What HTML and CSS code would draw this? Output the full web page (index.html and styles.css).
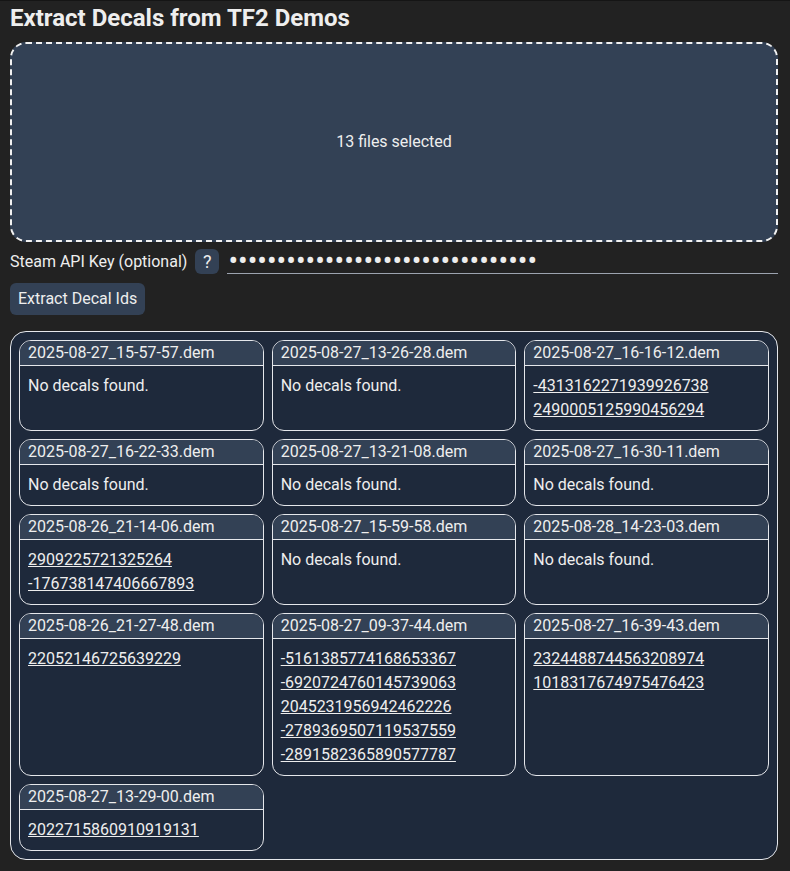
FILE: index.html
```html
<!DOCTYPE html>
<html>
<head>
<meta charset="utf-8">
<link rel="stylesheet" href="styles.css">
</head>
<body>
<div class="page">
  <h1 class="title">Extract Decals from TF2 Demos</h1>
  <div class="dropzone">13 files selected</div>
  <div class="api-row">
    <label class="api-label">Steam API Key (optional)</label>
    <button class="help">?</button>
    <input class="api-input" type="password" value="ABCDEF0123456789ABCDEF0123456789">
  </div>
  <div class="actions">
    <button class="btn">Extract Decal Ids</button>
  </div>
  <div class="results">
    <div class="card"><div class="card-head">2025-08-27_15-57-57.dem</div><div class="card-body">No decals found.</div></div>
    <div class="card"><div class="card-head">2025-08-27_13-26-28.dem</div><div class="card-body">No decals found.</div></div>
    <div class="card"><div class="card-head">2025-08-27_16-16-12.dem</div><div class="card-body"><a href="#">-4313162271939926738</a><a href="#">2490005125990456294</a></div></div>

    <div class="card"><div class="card-head">2025-08-27_16-22-33.dem</div><div class="card-body">No decals found.</div></div>
    <div class="card"><div class="card-head">2025-08-27_13-21-08.dem</div><div class="card-body">No decals found.</div></div>
    <div class="card"><div class="card-head">2025-08-27_16-30-11.dem</div><div class="card-body">No decals found.</div></div>

    <div class="card"><div class="card-head">2025-08-26_21-14-06.dem</div><div class="card-body"><a href="#">2909225721325264</a><a href="#">-176738147406667893</a></div></div>
    <div class="card"><div class="card-head">2025-08-27_15-59-58.dem</div><div class="card-body">No decals found.</div></div>
    <div class="card"><div class="card-head">2025-08-28_14-23-03.dem</div><div class="card-body">No decals found.</div></div>

    <div class="card"><div class="card-head">2025-08-26_21-27-48.dem</div><div class="card-body"><a href="#">22052146725639229</a></div></div>
    <div class="card"><div class="card-head">2025-08-27_09-37-44.dem</div><div class="card-body"><a href="#">-5161385774168653367</a><a href="#">-6920724760145739063</a><a href="#">2045231956942462226</a><a href="#">-2789369507119537559</a><a href="#">-2891582365890577787</a></div></div>
    <div class="card"><div class="card-head">2025-08-27_16-39-43.dem</div><div class="card-body"><a href="#">2324488744563208974</a><a href="#">1018317674975476423</a></div></div>

    <div class="card"><div class="card-head">2025-08-27_13-29-00.dem</div><div class="card-body"><a href="#">2022715860910919131</a></div></div>
  </div>
</div>
</body>
</html>
```

FILE: styles.css
```css
html, body {
  margin: 0;
  padding: 0;
  background: #222222;
}
body {
  border-top: 1px solid #151515;
  font-family: Roboto, "Liberation Sans", sans-serif;
  color: #eeeeee;
  font-size: 16px;
  line-height: 24px;
}
.page {
  padding: 3px 12px 12px 10px;
}
.title {
  margin: 0 0 10px 0;
  font-size: 24px;
  line-height: 28px;
  font-weight: 700;
  color: #eeeeee;
}
.dropzone {
  height: 196px;
  border: 2px dashed #f2f2f2;
  border-radius: 16px;
  background: #334155;
  display: flex;
  align-items: center;
  justify-content: center;
}
.api-row {
  display: flex;
  align-items: center;
  gap: 8px;
  margin-top: 7px;
}
.api-label {
  white-space: nowrap;
}
.help {
  width: 24px;
  height: 25px;
  padding: 0;
  border: none;
  border-radius: 6px;
  background: #334155;
  color: #eeeeee;
  font-family: inherit;
  font-size: 18px;
  line-height: 25px;
}
.api-input {
  flex: 1;
  min-width: 0;
  box-sizing: border-box;
  background: transparent;
  border: none;
  border-bottom: 1px solid #9ca3af;
  color: #eeeeee;
  font-family: inherit;
  font-size: 28.6px;
  height: 25px;
  line-height: 24px;
  padding: 0 2px 0 1px;
  outline: none;
}
.actions {
  margin-top: 9px;
}
.btn {
  border: none;
  border-radius: 6px;
  background: #334155;
  color: #eeeeee;
  font-family: inherit;
  font-size: 16px;
  line-height: 24px;
  padding: 4px 8px;
}
.results {
  margin-top: 16px;
  border: 1px solid #e5e7eb;
  border-radius: 16px;
  background: #1e293b;
  padding: 8px;
  display: grid;
  grid-template-columns: repeat(3, 1fr);
  gap: 8px;
}
.card {
  border: 1px solid #e5e7eb;
  border-radius: 12px;
  overflow: hidden;
  display: flex;
  flex-direction: column;
  background: #1e293b;
}
.card-head {
  background: #334155;
  padding: 0 8px;
  border-bottom: 1px solid #e5e7eb;
  line-height: 24px;
}
.card-body {
  flex: 1;
  padding: 8px;
  display: flex;
  flex-direction: column;
  align-items: flex-start;
}
.card-body a {
  color: #eeeeee;
  text-decoration: underline;
}
```
